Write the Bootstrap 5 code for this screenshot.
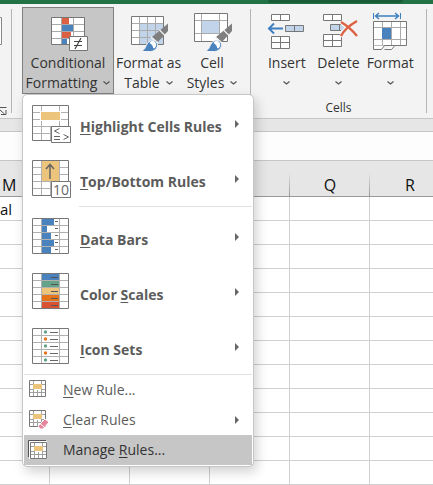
<!DOCTYPE html>
<html lang="en">
<head>
<meta charset="utf-8">
<meta name="viewport" content="width=device-width, initial-scale=1">
<title>Conditional Formatting</title>
<link href="https://cdn.jsdelivr.net/npm/bootstrap@5.3.0/dist/css/bootstrap.min.css" rel="stylesheet">
<style>
body{font-family:"Open Sans","Noto Sans",sans-serif;font-size:14px;line-height:20px;color:#333;overflow:hidden;background:#fff}
svg{display:block;flex:none;overflow:visible}
.topbar{height:4px;background:#217346}
.search-edge{width:31%;height:3px;margin-right:7%;background:#1a5c38;border-radius:0 0 4px 4px}
.ribbon{background:#f3f3f3;height:115px;border-bottom:1px solid #c6c6c6;padding-top:3px}
.rule{width:1px;height:104px;margin-top:2px;background:#b5b5b5;flex:none}
.edge-group{width:11px;flex:none;padding-top:10px;padding-bottom:2px}
.styles-group{width:238px;padding-left:10px;flex:none}
.cells-group{width:175px;flex:none;padding-left:10px;padding-right:10px}
.rbtn{border:1px solid transparent;border-radius:0;background:none;padding:5px 0 0;height:87px;color:#333;font-size:14px;line-height:20px;display:flex;flex-direction:column;align-items:center;white-space:nowrap}
.rbtn svg.pic{margin-bottom:2px}
.rbtn.pressed{background:#c6c6c6;border-color:#7f7f7f}
.with-chev{display:flex;align-items:center;gap:6px}
.w-cond{width:92px}.w-tbl{width:69px}.w-cell{width:58px}.w-cmd{width:52px}
.group-name{font-size:12px;line-height:16px;margin-top:6px}
.rules-menu{--bs-dropdown-min-width:232px;width:232px;top:100%;left:0;margin:0;padding:1px 1px;border:1px solid #c6c6c6;border-radius:5px;box-shadow:3px 5px 12px rgba(0,0,0,.18);font-size:14px}
.rules-menu .dropdown-item{display:flex;align-items:center;color:#5c5c5c;padding:0 13px 0 8px;line-height:20px}
.big-item{height:55px;font-weight:700;gap:8px}
.big-item span{padding-top:6px}
.small-item{height:30px;gap:11px}
.rules-menu .small-item{padding-left:4px}
.rules-menu .current{background:#c6c6c6;color:#333}
.rules-menu u{text-underline-offset:2px}
.rules-menu hr{margin:0;border-top:1px solid #dfe1e5;opacity:1}
.inset-rule{padding:0 0 2px 55px}
.gap-band{height:13px;background:#e6e6e6;border-bottom:1px solid #c6c6c6}
.formula{height:29px;background:#fdfdfd;border-bottom:1px solid #c6c6c6}
.sheet{table-layout:fixed;width:450px;min-width:100%;border-collapse:separate;border-spacing:0;color:#111;font-size:16px}
.sheet th{height:36px;padding:12px 0 0;font-weight:400;text-align:center;line-height:20px;border-bottom:1px solid #999;background:linear-gradient(#e6e6e6,#999) right bottom/1px 24px no-repeat #e6e6e6}
.sheet td{height:24px;padding:0;line-height:20px;border-right:1px solid #d0d0d0;border-bottom:1px solid #d0d0d0}
.sheet .cut{width:50px;text-align:left;font-size:15px}
.sheet th.cut{padding-left:2px;font-size:16px}
.sheet .std{width:80px}
</style>
<script src="https://cdn.jsdelivr.net/npm/bootstrap@5.3.0/dist/js/bootstrap.bundle.min.js"></script>
</head>
<body>
<svg width="0" height="0" class="position-absolute" aria-hidden="true">
<defs>
<g id="brush">
<path d="M40 10.500V18L30 29l-6-5z" fill="#7f7f7f"/>
<path d="M31.500 17l6 6M23 24l7 6" stroke="#f3f3f3" stroke-width="1.200" fill="none"/>
<path d="M12 38.500c5-1 5-4 7-7.500 2-4 7-5 9.500-2 3 4-1 9.500-6 9.500z" fill="#4a82bd" stroke="#f3f3f3" stroke-width="1"/>
<path d="M21.500 30c1-2.500 4.500-2.500 6-.5 1.500 2 .5 5-1.500 6-1.500 0 0-3-4.500-5.500z" fill="#fff"/>
</g>
<path id="chev" d="M.5.5 3.500 3l3-2.500" fill="none" stroke="#555" stroke-width="1.200"/>
<g id="frame"><path d="M.5.5h36v35H.500z" fill="#fff"/></g>
<path id="rows5" d="M1 7.500h35M1 14.500h35M1 21.500h35M1 28.500h35M9.500 1v34M27.500 1v34" stroke="#b0b0b0" fill="none"/>
<path id="outline" d="M.5.5h36v35H.500z" fill="none" stroke="#777"/>
<g id="mini"><path d="M.5.500h16v16H.500z" fill="#fff" stroke="#777"/><path d="M1 4.500h15M1 12.500h15M4.500 1v15M12.500 1v15M8.500 10v6M1 9.500h4M13 9.500h3" stroke="#a0a0a0"/><path d="M4 4h9v5H4z" fill="#ecc47c"/></g>
</defs>
</svg>
<div class="topbar d-flex justify-content-end"><div class="search-edge"></div></div>
<header class="ribbon d-flex">
  <div class="edge-group d-flex flex-column justify-content-between">
    <svg width="3" height="30" viewBox="0 0 3 30"><path d="M0 .5h1.500v27H0" fill="#fff" stroke="#888"/></svg>
    <svg width="8" height="10" viewBox="0 0 8 10"><path d="M0 1.500h6.500M0 4l4.500 4M6 4v4.500H1" fill="none" stroke="#555"/></svg>
  </div>
  <div class="rule"></div>
  <div class="styles-group d-flex align-items-start">
    <div class="dropdown">
      <button type="button" class="rbtn pressed w-cond" aria-expanded="true">
        <svg class="pic" width="40" height="38" viewBox="0 0 40 38"><path d="M3.500 4.500h33v27h-33z" fill="#fff"/><path d="M14 5h7v6h-7zM14 18h9v7h-9z" fill="#dc6142"/><path d="M14 11h11v7H14zM14 25h5v6h-5z" fill="#4a82bd"/><path d="M13.500 5v26M25.500 5v26M4 11.500h32M4 18.500h32M4 25.500h32" stroke="#aaa" fill="none"/><path d="M3.500 4.500h33v27h-33z" fill="none" stroke="#777"/><path d="M21.500 23.500h18v14h-18z" fill="#fff" stroke="#777"/><path d="M26 28.500h8M26 32.500h8M33 25l-6 11" stroke="#444" stroke-width="1.200"/></svg>
        <span>Conditional</span>
        <span class="with-chev">Formatting <svg width="7" height="4"><use href="#chev"/></svg></span>
      </button>
      <div class="dropdown-menu rules-menu show">
        <a href="#" class="dropdown-item big-item">
          <svg width="40" height="38" viewBox="0 0 40 38"><use href="#frame"/><path d="M9.500 1v34M27.500 1v34M18.500 21v14M1 7.500h35M1 14.500h35M1 21.500h35M1 28.500h35" stroke="#b0b0b0"/><path d="M8 6h21v10H8z" fill="#fff"/><path d="M9 7h19v8H9z" fill="#ecc47c"/><use href="#outline"/><path d="M19.500 21.500h19v16h-19z" fill="#fff" stroke="#777"/><path d="M27.500 23.500l-5 2.500 5 2.500M31.500 29.500l5 2.500-5 2.500M22 31.500h6M22 34.500h6" fill="none" stroke="#666"/></svg>
          <span class="flex-grow-1"><u>H</u>ighlight Cells Rules</span><svg width="4" height="8"><path d="M0 0l4 4-4 4z" fill="#666"/></svg></a>
        <a href="#" class="dropdown-item big-item">
          <svg width="40" height="38" viewBox="0 0 40 38"><use href="#frame"/><path d="M9 1h19v20H9z" fill="#ecc47c"/><path d="M9.500 1v34M27.500 1v34M18.500 21v14M1 7.500h8M28 7.500h8M1 14.500h8M28 14.500h8M1 21.500h35M1 28.500h35" stroke="#b0b0b0"/><use href="#outline"/><path d="M18 19V5M14 9l4-4.500L22 9" fill="none" stroke="#666" stroke-width="1.500"/><path d="M19.500 21.500h19v16h-19z" fill="#fff" stroke="#777"/><text x="29" y="34.500" text-anchor="middle" font-size="14" font-weight="400" fill="#666">10</text></svg>
          <span class="flex-grow-1"><u>T</u>op/Bottom Rules</span><svg width="4" height="8"><path d="M0 0l4 4-4 4z" fill="#666"/></svg></a>
        <div class="inset-rule"><hr></div>
        <a href="#" class="dropdown-item big-item">
          <svg width="40" height="38" viewBox="0 0 40 38"><use href="#frame"/><use href="#rows5"/><path d="M10 1h12v6H10zM10 8h5v6h-5zM10 15h9v6h-9zM10 22h12v6H10zM10 29h9v6h-9z" fill="#4a82bd"/><path d="M23 3.500h3M23 10.500h3M23 17.500h3M23 24.500h3M23 31.500h3" stroke="#666"/><use href="#outline"/></svg>
          <span class="flex-grow-1"><u>D</u>ata Bars</span><svg width="4" height="8"><path d="M0 0l4 4-4 4z" fill="#666"/></svg></a>
        <a href="#" class="dropdown-item big-item">
          <svg width="40" height="38" viewBox="0 0 40 38"><use href="#frame"/><use href="#rows5"/><path d="M10 1h17v6H10z" fill="#4a82bd"/><path d="M10 8h17v6H10z" fill="#64a38a"/><path d="M10 15h17v6H10z" fill="#ecc47c"/><path d="M10 22h17v6H10z" fill="#e5731a"/><path d="M10 29h17v6H10z" fill="#d95332"/><path d="M19 4.500h7M19 11.500h7M19 18.500h7M19 25.500h7M19 32.500h7" stroke="#555"/><use href="#outline"/></svg>
          <span class="flex-grow-1">Color <u>S</u>cales</span><svg width="4" height="8"><path d="M0 0l4 4-4 4z" fill="#666"/></svg></a>
        <a href="#" class="dropdown-item big-item">
          <svg width="40" height="38" viewBox="0 0 40 38"><use href="#frame"/><use href="#rows5"/><g fill="#64a38a"><circle cx="13.500" cy="4" r="1.700"/><circle cx="13.500" cy="18" r="1.700"/><circle cx="13.500" cy="32" r="1.700"/></g><g fill="#e5731a"><circle cx="13.500" cy="11" r="1.700"/><circle cx="13.500" cy="25" r="1.700"/></g><path d="M18 4.500h8M18 11.500h8M18 18.500h8M18 25.500h8M18 32.500h8" stroke="#666"/><use href="#outline"/></svg>
          <span class="flex-grow-1"><u>I</u>con Sets</span><svg width="4" height="8"><path d="M0 0l4 4-4 4z" fill="#666"/></svg></a>
        <hr>
        <a href="#" class="dropdown-item small-item"><svg width="24" height="20" viewBox="-1 0 24 20"><use href="#mini"/></svg><span><u>N</u>ew Rule...</span></a>
        <a href="#" class="dropdown-item small-item"><svg width="24" height="20" viewBox="-1 0 24 20"><use href="#mini"/><path d="M9 16l7-7 4 3-6 7h-3z" fill="#e8849b" stroke="#fff"/><path d="M11 13.500l4 3.500" stroke="#fff"/></svg><span class="flex-grow-1"><u>C</u>lear Rules</span><svg width="4" height="8"><path d="M0 0l4 4-4 4z" fill="#666"/></svg></a>
        <a href="#" class="dropdown-item small-item current"><svg width="24" height="20" viewBox="-1 0 24 20"><path d="M-.5 17V.5H17" fill="none" stroke="#555"/><path d="M0 1h18v18H0z" fill="#fff"/><g transform="translate(1 2)"><use href="#mini"/></g></svg><span>Manage <u>R</u>ules...</span></a>
      </div>
    </div>
    <button type="button" class="rbtn w-tbl">
      <svg class="pic" width="42" height="38" viewBox="0 0 42 38"><path d="M3.500 3.500h32v28h-32z" fill="#fff"/><path d="M11 11h24v20H11z" fill="#c1d4ea"/><path d="M11.500 4v27M19.500 4v27M27.500 4v27M4 10.500h31M4 17.500h31M4 24.500h31" stroke="#aaa"/><path d="M3.500 3.500h32v28h-32z" fill="none" stroke="#777"/><use href="#brush"/></svg>
      <span>Format as</span><span class="with-chev">Table <svg width="7" height="4"><use href="#chev"/></svg></span>
    </button>
    <button type="button" class="rbtn w-cell">
      <svg class="pic" width="42" height="38" viewBox="0 0 42 38"><path d="M3.500.5h33v28h-33z" fill="#fff"/><path d="M11 8h17v13H11z" fill="#c1d4ea"/><path d="M10.500 1v27M28.500 1v27M4 7.500h32M4 20.500h32" stroke="#aaa"/><path d="M3.500.5h33v28h-33z" fill="none" stroke="#777"/><use href="#brush" x="1"/></svg>
      <span>Cell</span><span class="with-chev">Styles <svg width="7" height="4"><use href="#chev"/></svg></span>
    </button>
  </div>
  <div class="rule"></div>
  <div class="cells-group">
    <div class="d-flex">
      <button type="button" class="rbtn w-cmd"><svg class="pic" width="40" height="38" viewBox="0 0 40 38"><path d="M4.500 1.500h18v6h-18zM4.500 23.500h18v12h-18z" fill="#fff" stroke="#777"/><path d="M13.500 2v5M13.500 24v11M5 29.500h17" stroke="#777"/><path d="M18.500 12.500h18v6h-18z" fill="#c1d4ea" stroke="#777"/><path d="M27.500 13v5" stroke="#777"/><path d="M16 15.500H3M7 10.500l-5 5 5 5" fill="none" stroke="#3f7fc1" stroke-width="2"/></svg><span>Insert</span><span class="with-chev flex-grow-1"><svg width="7" height="4"><use href="#chev"/></svg></span></button>
      <button type="button" class="rbtn w-cmd"><svg class="pic" width="40" height="38" viewBox="0 0 40 38"><path d="M4.500 1.500h18v6h-18zM4.500 21.500h18v12h-18z" fill="#fff" stroke="#777"/><path d="M13.500 2v5M13.500 22v11M5 27.500h17" stroke="#777"/><path d="M11.500 11.500h11l3 3-3 3h-11z" fill="#c1d4ea"/><path d="M22 11.500H11.500v6H22M20.500 12v5" fill="none" stroke="#777"/><path d="M22 9l16 14M37 9C31 12 25 18 22 24" stroke="#f3f3f3" stroke-width="4" fill="none"/><path d="M22 9c5 3 12 9 16 14M38 8C31 12 25 17 22 23" stroke="#dc6142" stroke-width="2.400" fill="none"/></svg><span>Delete</span><span class="with-chev flex-grow-1"><svg width="7" height="4"><use href="#chev"/></svg></span></button>
      <button type="button" class="rbtn w-cmd"><svg class="pic" width="40" height="38" viewBox="0 0 40 38"><path d="M3.500 0v6M30.500 0v6" stroke="#3f7fc1"/><path d="M6 3h22M9 0L5.500 3 9 6M25 0l3.500 3L25 6" fill="none" stroke="#3f7fc1" stroke-width="1.500"/><path d="M3.500 8.500h33v24h-33z" fill="#fff"/><path d="M12.500 9v23M21.500 9v23M30.500 9v23M4 14.500h32M4 26.500h32" stroke="#aaa"/><path d="M12 15h9v11h-9z" fill="#4a82bd"/><path d="M3.500 8.500h33v24h-33z" fill="none" stroke="#777"/><path d="M3.500 32.500v4h8l3-4M14.500 36.500h7l3.500-4" fill="#fff" stroke="#777"/></svg><span>Format</span><span class="with-chev flex-grow-1"><svg width="7" height="4"><use href="#chev"/></svg></span></button>
    </div>
    <div class="group-name text-center">Cells</div>
  </div>
  <div class="rule"></div>
</header>
<div class="gap-band"></div>
<div class="formula"></div>
<main class="overflow-hidden">
<table class="sheet">
<thead><tr><th class="cut">M</th><th class="std"></th><th class="std"></th><th class="std"></th><th class="std">Q</th><th>R</th></tr></thead>
<tbody>
<tr><td class="cut">al</td><td></td><td></td><td></td><td></td><td></td></tr>
<tr><td></td><td></td><td></td><td></td><td></td><td></td></tr>
<tr><td></td><td></td><td></td><td></td><td></td><td></td></tr>
<tr><td></td><td></td><td></td><td></td><td></td><td></td></tr>
<tr><td></td><td></td><td></td><td></td><td></td><td></td></tr>
<tr><td></td><td></td><td></td><td></td><td></td><td></td></tr>
<tr><td></td><td></td><td></td><td></td><td></td><td></td></tr>
<tr><td></td><td></td><td></td><td></td><td></td><td></td></tr>
<tr><td></td><td></td><td></td><td></td><td></td><td></td></tr>
<tr><td></td><td></td><td></td><td></td><td></td><td></td></tr>
<tr><td></td><td></td><td></td><td></td><td></td><td></td></tr>
<tr><td></td><td></td><td></td><td></td><td></td><td></td></tr>
</tbody>
</table>
</main>
</body>
</html>
